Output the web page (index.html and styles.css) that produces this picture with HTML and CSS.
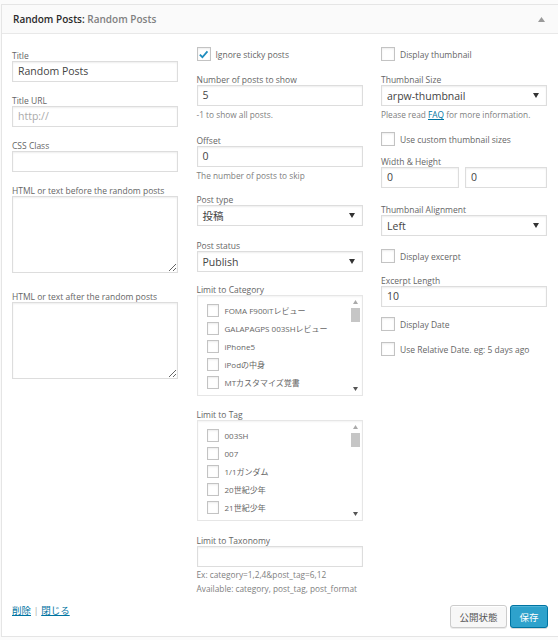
FILE: index.html
```html
<!DOCTYPE html>
<html lang="ja">
<head>
<meta charset="utf-8">
<title>Random Posts widget</title>
<link rel="stylesheet" href="styles.css">
</head>
<body>
<div class="widget">
  <div class="widget-top">
    <div class="widget-title"><strong>Random Posts:</strong> <span class="in-title">Random Posts</span></div>
    <svg class="toggle" width="7" height="5" viewBox="0 0 7 5"><path d="M0 5 L3.5 0 L7 5 Z" fill="#9a9a9a"/></svg>
  </div>
  <div class="widget-inside">
    <div class="cols">
      <div class="col col-left">
        <div class="f f12">
          <label class="lbl">Title</label>
          <div class="input">Random Posts</div>
        </div>
        <div class="f f12">
          <label class="lbl">Title URL</label>
          <div class="input placeholder">http://</div>
        </div>
        <div class="f f12">
          <label class="lbl">CSS Class</label>
          <div class="input"></div>
        </div>
        <div class="f f17">
          <label class="lbl">HTML or text before the random posts</label>
          <textarea class="area"></textarea>
        </div>
        <div class="f">
          <label class="lbl">HTML or text after the random posts</label>
          <textarea class="area"></textarea>
        </div>
      </div>

      <div class="col">
        <div class="check-row f12">
          <span class="cb checked"><svg width="11" height="11" viewBox="0 0 12 12"><path d="M2 6.2 L4.8 9 L10.3 2.6" fill="none" stroke="#1e8cbe" stroke-width="2"/></svg></span>
          <span class="cb-text">Ignore sticky posts</span>
        </div>
        <div class="f f13">
          <label class="lbl">Number of posts to show</label>
          <div class="input">5</div>
          <p class="desc">-1 to show all posts.</p>
        </div>
        <div class="f f11">
          <label class="lbl">Offset</label>
          <div class="input">0</div>
          <p class="desc">The number of posts to skip</p>
        </div>
        <div class="f f13">
          <label class="lbl">Post type</label>
          <div class="select"><span>投稿</span><svg width="6" height="5" viewBox="0 0 6 5"><path d="M0 0 L6 0 L3 5 Z" fill="#333"/></svg></div>
        </div>
        <div class="f f11">
          <label class="lbl">Post status</label>
          <div class="select"><span>Publish</span><svg width="6" height="5" viewBox="0 0 6 5"><path d="M0 0 L6 0 L3 5 Z" fill="#333"/></svg></div>
        </div>
        <div class="f f12">
          <label class="lbl">Limit to Category</label>
          <div class="listbox">
            <ul class="items">
              <li><span class="cb sm"></span>FOMA F900iTレビュー</li>
              <li><span class="cb sm"></span>GALAPAGPS 003SHレビュー</li>
              <li><span class="cb sm"></span>iPhone5</li>
              <li><span class="cb sm"></span>iPodの中身</li>
              <li><span class="cb sm"></span>MTカスタマイズ覚書</li>
            </ul>
            <div class="sbar">
              <svg width="5" height="4" viewBox="0 0 5 4"><path d="M0 4 L2.5 0 L5 4 Z" fill="#aaa"/></svg>
              <span class="thumb"></span>
              <span class="track"></span>
              <svg width="5" height="4" viewBox="0 0 5 4"><path d="M0 0 L5 0 L2.5 4 Z" fill="#555"/></svg>
            </div>
          </div>
        </div>
        <div class="f f13">
          <label class="lbl">Limit to Tag</label>
          <div class="listbox">
            <ul class="items">
              <li><span class="cb sm"></span>003SH</li>
              <li><span class="cb sm"></span>007</li>
              <li><span class="cb sm"></span>1/1ガンダム</li>
              <li><span class="cb sm"></span>20世紀少年</li>
              <li><span class="cb sm"></span>21世紀少年</li>
            </ul>
            <div class="sbar">
              <svg width="5" height="4" viewBox="0 0 5 4"><path d="M0 4 L2.5 0 L5 4 Z" fill="#aaa"/></svg>
              <span class="thumb"></span>
              <span class="track"></span>
              <svg width="5" height="4" viewBox="0 0 5 4"><path d="M0 0 L5 0 L2.5 4 Z" fill="#555"/></svg>
            </div>
          </div>
        </div>
        <div class="f">
          <label class="lbl">Limit to Taxonomy</label>
          <div class="input"></div>
          <p class="desc desc-ex">Ex: category=1,2,4&amp;post_tag=6,12</p>
          <p class="desc desc2">Available: category, post_tag, post_format</p>
        </div>
      </div>

      <div class="col">
        <div class="check-row f12">
          <span class="cb"></span>
          <span class="cb-text">Display thumbnail</span>
        </div>
        <div class="f f11">
          <label class="lbl">Thumbnail Size</label>
          <div class="select"><span>arpw-thumbnail</span><svg width="6" height="5" viewBox="0 0 6 5"><path d="M0 0 L6 0 L3 5 Z" fill="#333"/></svg></div>
          <p class="desc">Please read <a href="#">FAQ</a> for more information.</p>
        </div>
        <div class="check-row f9">
          <span class="cb"></span>
          <span class="cb-text">Use custom thumbnail sizes</span>
        </div>
        <div class="f f15">
          <label class="lbl">Width &amp; Height</label>
          <div class="pair">
            <div class="input">0</div>
            <div class="input">0</div>
          </div>
        </div>
        <div class="f f13">
          <label class="lbl">Thumbnail Alignment</label>
          <div class="select"><span>Left</span><svg width="6" height="5" viewBox="0 0 6 5"><path d="M0 0 L6 0 L3 5 Z" fill="#333"/></svg></div>
        </div>
        <div class="check-row f11">
          <span class="cb"></span>
          <span class="cb-text">Display excerpt</span>
        </div>
        <div class="f f10">
          <label class="lbl">Excerpt Length</label>
          <div class="input">10</div>
        </div>
        <div class="check-row f11">
          <span class="cb"></span>
          <span class="cb-text">Display Date</span>
        </div>
        <div class="check-row">
          <span class="cb"></span>
          <span class="cb-text">Use Relative Date. eg: 5 days ago</span>
        </div>
      </div>
    </div>

    <div class="actions">
      <div class="links"><a href="#">削除</a> <span class="sep">|</span> <a href="#">閉じる</a></div>
      <div class="buttons">
        <button class="btn">公開状態</button>
        <button class="btn primary">保存</button>
      </div>
    </div>
  </div>
</div>
</body>
</html>
```
FILE: styles.css
```css
html { overflow: hidden; background: #fbfbfb; }
body {
  margin: 0;
  font-family: "Open Sans", "Noto Sans CJK JP", sans-serif;
  color: #444;
}
.widget {
  margin: 4px 0 0 1px;
  border: 1px solid #e5e5e5;
  border-right: none;
  background: #fff;
  box-shadow: 0 1px 1px rgba(0,0,0,.04);
}
.widget-top {
  height: 28px;
  background: #fafafa;
  border-bottom: 1px solid #e8e8e8;
  display: flex;
  align-items: center;
  justify-content: space-between;
  padding: 0 13px 0 11px;
}
.widget-title { font-size: 10px; color: #2a2a2a; }
.widget-title strong { font-weight: 600; }
.in-title { color: #808080; font-weight: 600; }
.toggle { margin-top: 1px; }

.widget-inside { padding: 13px 10px 0 10px; }
.cols {
  display: grid;
  grid-template-columns: 166px 166px 166px;
  column-gap: 18.5px;
  align-items: start;
}
.col { display: flex; flex-direction: column; }
.col-left { padding-top: 2px; }

.f9 { margin-bottom: 9px; }
.f10 { margin-bottom: 10px; }
.f11 { margin-bottom: 11px; }
.f12 { margin-bottom: 12px; }
.f13 { margin-bottom: 13px; }
.f14 { margin-bottom: 14px; }
.f15 { margin-bottom: 15px; }
.f17 { margin-bottom: 17px; }

.lbl {
  display: block;
  font-size: 8.5px;
  line-height: 10px;
  padding-top: 2px;
  color: #666;
}
.input {
  box-sizing: border-box;
  height: 21px;
  border: 1px solid #ddd;
  box-shadow: inset 0 1px 2px rgba(0,0,0,.07);
  background: #fff;
  font-size: 10.5px;
  line-height: 19px;
  padding: 0 5px;
  color: #444;
}
.input.placeholder { color: #aaa; }
.area {
  display: block;
  box-sizing: border-box;
  width: 166px;
  height: 77px;
  margin: 0;
  border: 1px solid #ddd;
  box-shadow: inset 0 1px 2px rgba(0,0,0,.07);
  resize: vertical;
  font-family: inherit;
}
.desc {
  margin: 3px 0 0;
  font-size: 8.3px;
  line-height: 12px;
  color: #808080;
}
.desc a { color: #0074a2; }
.desc-ex { margin-top: 2px; }
.desc2 { margin-top: 2px; }

.check-row {
  display: flex;
  align-items: center;
  height: 14px;
}
.cb {
  box-sizing: border-box;
  width: 14px;
  height: 14px;
  border: 1px solid #c3c3c3;
  background: #fff;
  box-shadow: inset 0 1px 2px rgba(0,0,0,.08);
  display: inline-flex;
  align-items: center;
  justify-content: center;
  flex: none;
}
.cb-text {
  margin-left: 5px;
  font-size: 8.5px;
  color: #666;
}
.select {
  box-sizing: border-box;
  height: 21px;
  border: 1px solid #ddd;
  box-shadow: inset 0 1px 2px rgba(0,0,0,.07);
  background: #fff;
  display: flex;
  align-items: center;
  justify-content: space-between;
  padding: 0 7px 0 5px;
  font-size: 10.5px;
  color: #444;
}
.listbox {
  box-sizing: border-box;
  height: 101px;
  border: 1px solid #e6e6e6;
  box-shadow: inset 0 1px 2px rgba(0,0,0,.05);
  display: flex;
  overflow: hidden;
}
.items {
  list-style: none;
  margin: 0;
  padding: 5px 0 0 9px;
  flex: 1;
}
.items li {
  height: 18px;
  display: flex;
  align-items: center;
  font-size: 8px;
  color: #666;
}
.cb.sm { width: 12px; height: 13px; margin-right: 6px; }
.sbar {
  width: 12px;
  display: flex;
  flex-direction: column;
  align-items: center;
  padding: 4px 0;
}
.sbar .thumb {
  width: 9px;
  height: 14px;
  background: #c6c6c6;
  margin-top: 4px;
}
.sbar .track { flex: 1; }

.pair {
  display: grid;
  grid-template-columns: 78px 1fr;
  column-gap: 6px;
}

.actions {
  display: flex;
  justify-content: space-between;
  align-items: flex-start;
  padding: 10px 0 8px 0;
}
.links { font-size: 9.5px; line-height: 12px; color: #aaa; }
.links a { color: #0074a2; }
.buttons { display: flex; gap: 3px; }
.btn {
  box-sizing: border-box;
  height: 23px;
  padding: 0 8.5px;
  border: 1px solid #ccc;
  border-radius: 3px;
  background: #f7f7f7;
  box-shadow: inset 0 1px 0 #fff, 0 1px 0 rgba(0,0,0,.08);
  font-family: "Open Sans", "Noto Sans CJK JP", sans-serif;
  font-size: 9.5px;
  color: #555;
}
.btn.primary {
  background: #2ea2cc;
  border-color: #0074a2;
  color: #fff;
  box-shadow: inset 0 1px 0 rgba(120,200,230,.5), 0 1px 0 rgba(0,0,0,.15);
}
```
